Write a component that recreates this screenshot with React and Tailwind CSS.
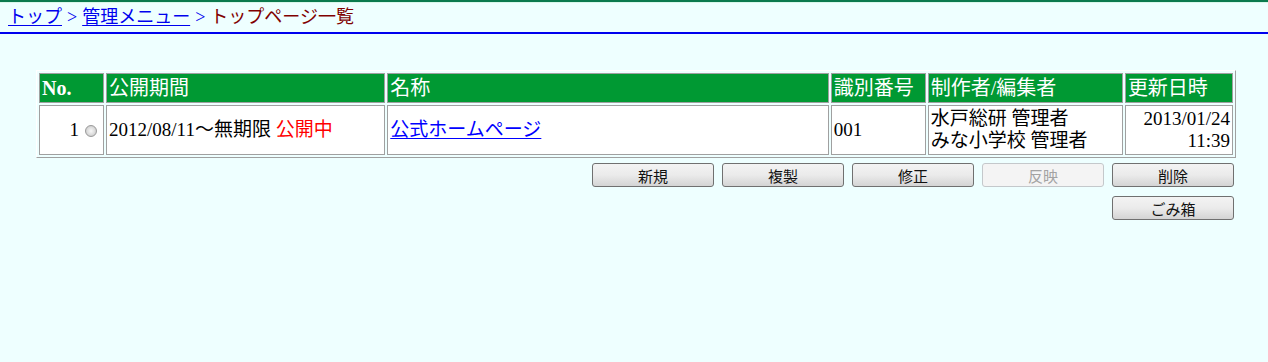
import React from "react";

const serif = "font-['Liberation_Serif','Noto_Sans_CJK_JP',serif]";

function Btn({ children, disabled }) {
  return (
    <button
      type="button"
      disabled={disabled}
      className={
        "w-[122px] h-[24px] rounded-[3px] border text-[15px] leading-none font-['Noto_Sans_CJK_JP',sans-serif] flex items-center justify-center " +
        (disabled
          ? "border-[#c4c8cb] bg-[#f4f4f4] text-[#a3a3a3]"
          : "border-[#707070] bg-linear-to-b from-[#f3f3f3] via-[#ebebeb] to-[#d4d4d4] text-[#111]")
      }
    >
      {children}
    </button>
  );
}

function Radio() {
  return (
    <span className="inline-block w-[12px] h-[12px] rounded-full border border-[#9a9a9a] bg-radial from-[#f8f8f8] via-[#dedede] to-[#bdbdbd] align-[-1px]" />
  );
}

export default function App() {
  const thBase = "bg-[#009933] text-white text-left text-[20px] leading-[28px] px-[2px] border border-[#a0a0a0] whitespace-nowrap";
  const th = thBase + " font-normal";
  const td = "bg-white text-black text-[19px] leading-[22px] px-[2px] border border-[#a0a0a0] align-middle";
  return (
    <div className={"min-h-[362px] w-full bg-[#eeffff] " + serif}>
      <div className="h-[2px] bg-[#0b7a4e]" />
      <div className="h-[1px] bg-[#d9f7ea]" />
      <div className="h-[31px] border-b-2 border-[#0000ee] pl-[8px] flex items-end pb-[5px] text-[18px] leading-[20px]">
        <a className="text-[#0000ee] underline underline-offset-2">トップ</a>
        <span className="text-[#0000ee] mx-[5px]">&gt;</span>
        <a className="text-[#0000ee] underline underline-offset-2">管理メニュー</a>
        <span className="text-[#0000ee] mx-[5px]">&gt;</span>
        <span className="text-[#800000]">トップページ一覧</span>
      </div>

      <div className="ml-[36px] w-[1200px] mt-[36px]">
        <table className="w-[1200px] border-separate border-spacing-[2px] border-t border-l border-t-[#ffffff] border-l-[#ffffff] border-r border-b border-r-[#a0a0a0] border-b-[#a0a0a0] table-fixed">
          <colgroup>
            <col className="w-[65px]" />
            <col className="w-[279px]" />
            <col className="w-[441px]" />
            <col className="w-[95px]" />
            <col className="w-[195px]" />
            <col className="w-[108px]" />
          </colgroup>
          <thead>
            <tr>
              <th className={thBase + " font-bold"}>No.</th>
              <th className={th}>公開期間</th>
              <th className={th}>名称</th>
              <th className={th}>識別番号</th>
              <th className={th}>制作者/編集者</th>
              <th className={th}>更新日時</th>
            </tr>
          </thead>
          <tbody>
            <tr className="h-[50px]">
              <td className={td + " text-right pr-[6px]"}>
                <span className="mr-[6px]">1</span>
                <Radio />
              </td>
              <td className={td + " whitespace-nowrap"}>
                2012/08/11〜無期限 <span className="text-[#ff0000]">公開中</span>
              </td>
              <td className={td}>
                <a className="text-[#0000ff] underline underline-offset-2">公式ホームページ</a>
              </td>
              <td className={td}>001</td>
              <td className={td + " whitespace-nowrap"}>
                水戸総研 管理者
                <br />
                みな小学校 管理者
              </td>
              <td className={td + " text-right"}>
                2013/01/24
                <br />
                11:39
              </td>
            </tr>
          </tbody>
        </table>

        <div className="mt-[5px] flex flex-col items-end pr-[2px] gap-[9px]">
          <div className="flex gap-[8px]">
            <Btn>新規</Btn>
            <Btn>複製</Btn>
            <Btn>修正</Btn>
            <Btn disabled>反映</Btn>
            <Btn>削除</Btn>
          </div>
          <div className="flex">
            <Btn>ごみ箱</Btn>
          </div>
        </div>
      </div>
    </div>
  );
}
